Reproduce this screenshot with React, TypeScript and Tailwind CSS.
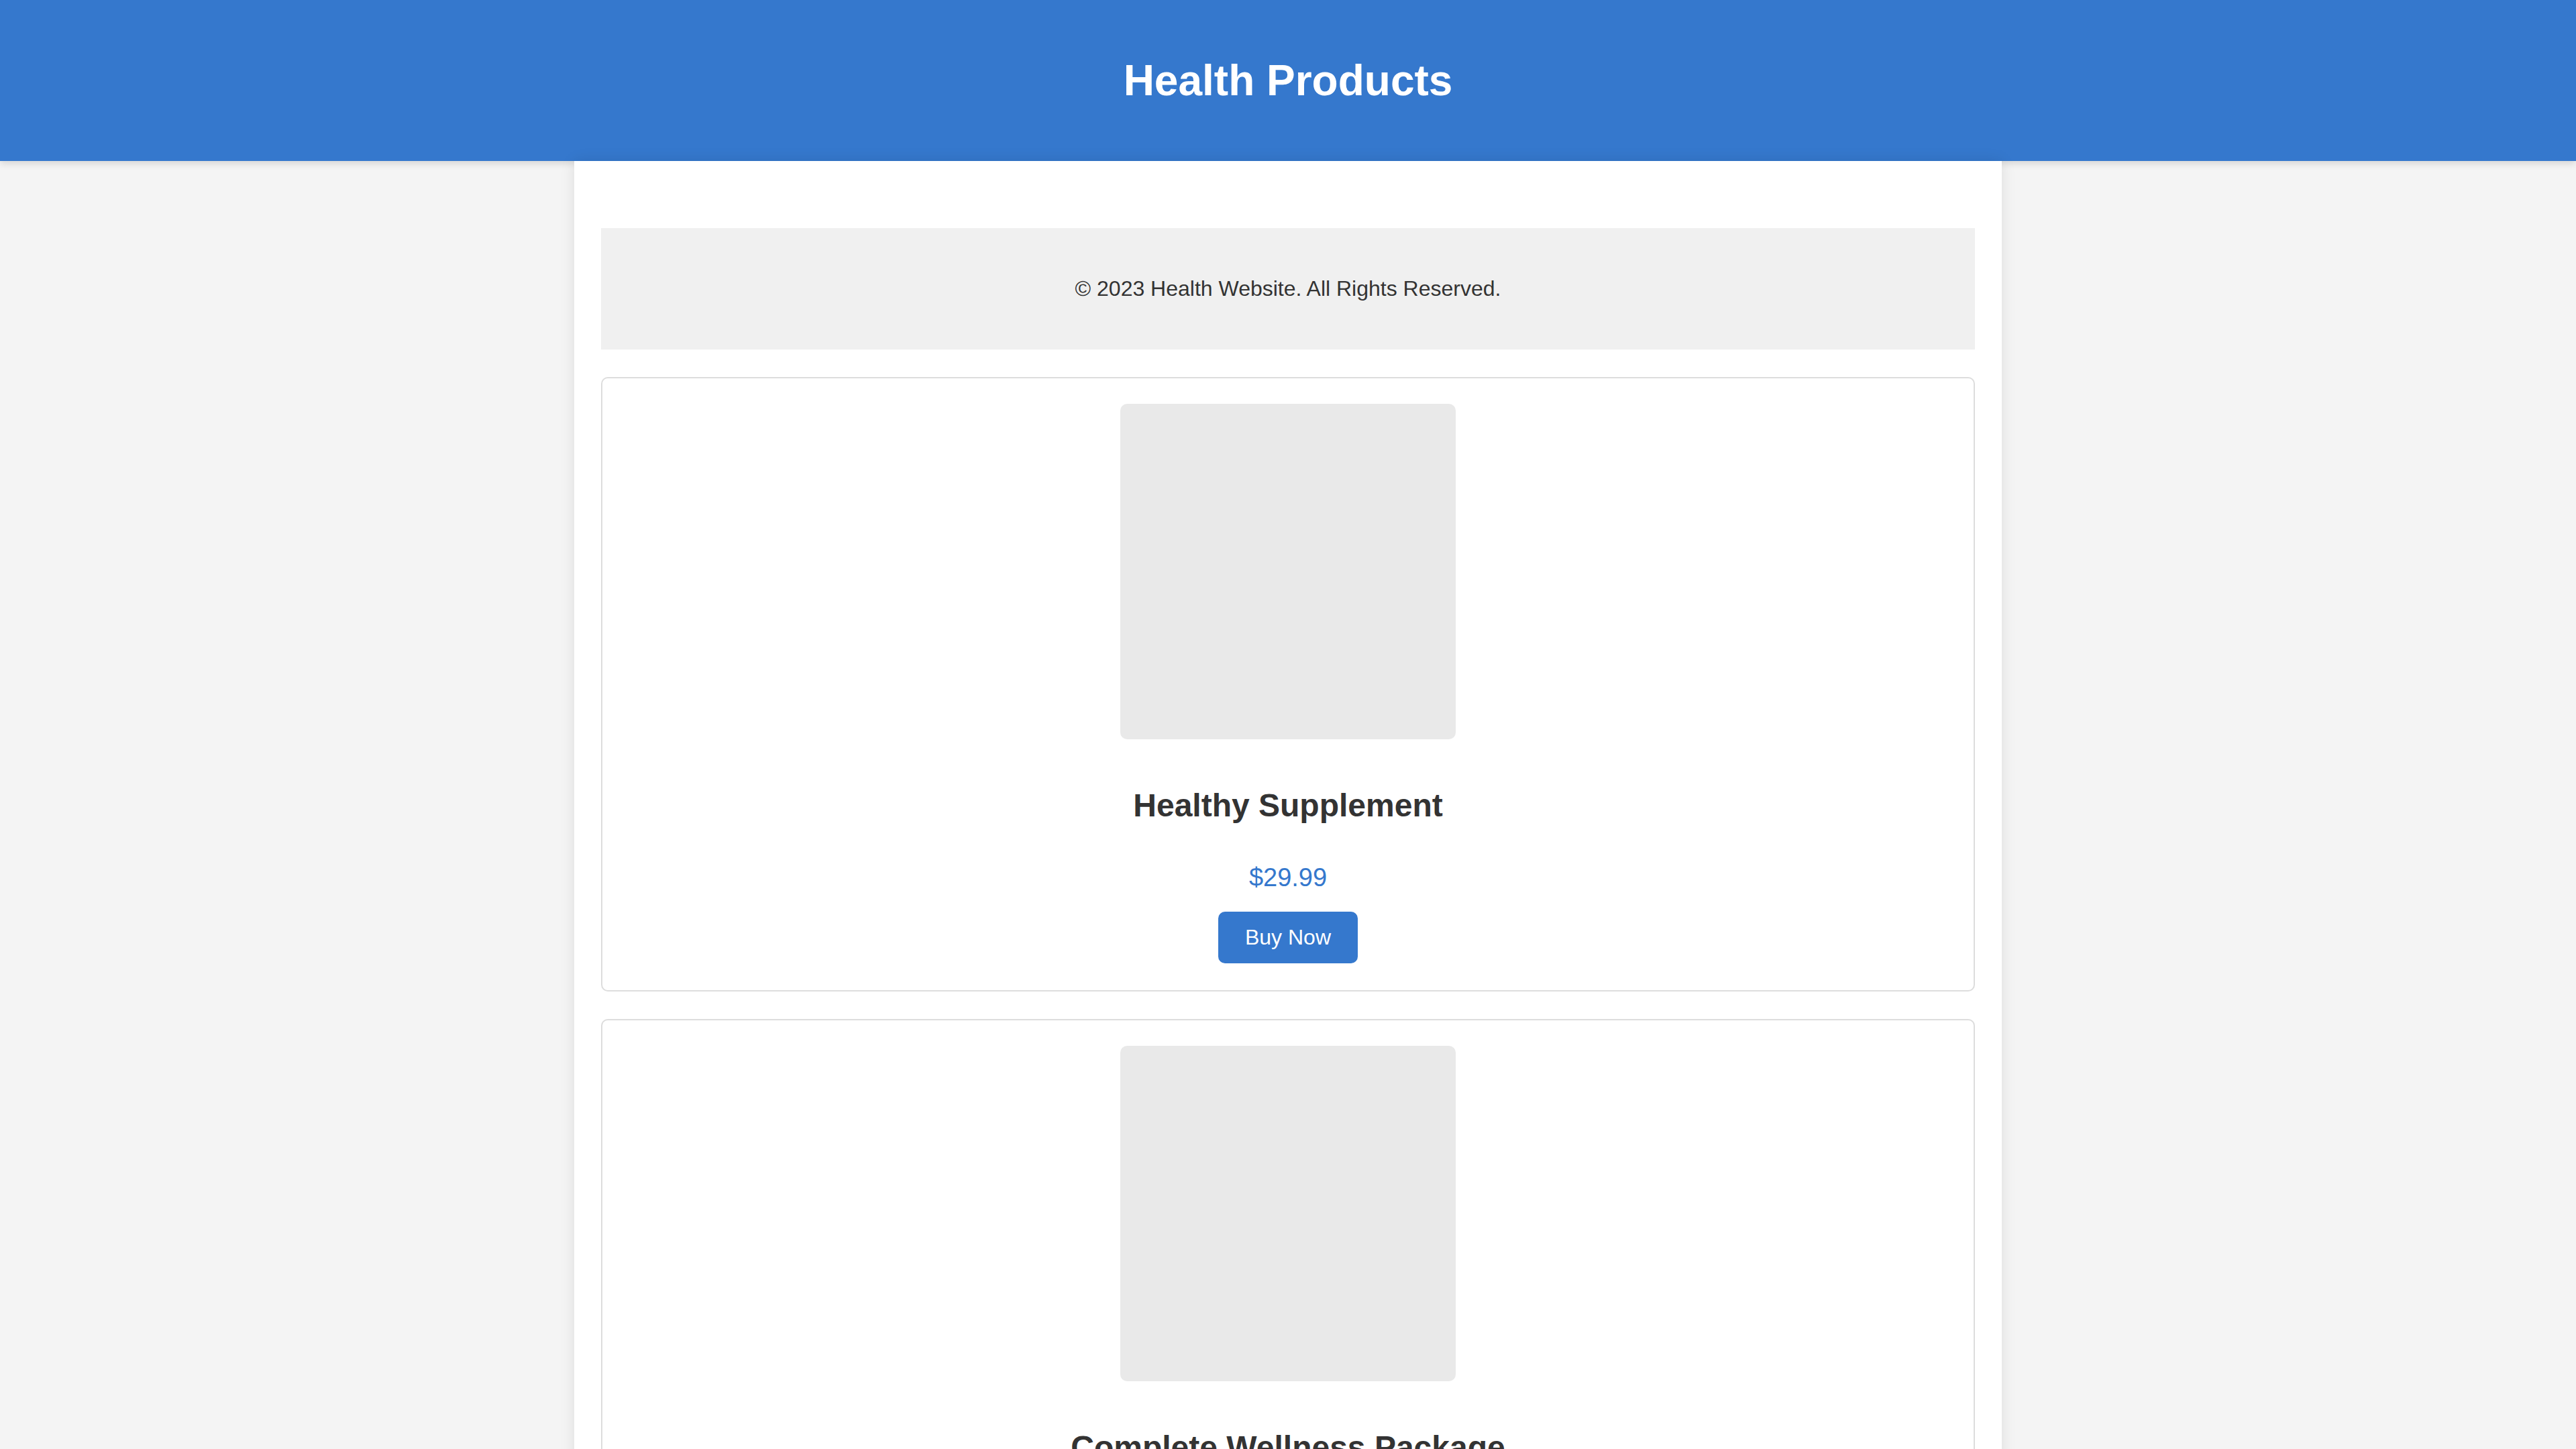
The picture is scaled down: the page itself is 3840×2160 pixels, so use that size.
export default function App() {
  const products = [
    { name: "Healthy Supplement", price: "$29.99" },
    { name: "Complete Wellness Package", price: "$79.99" },
    { name: "Organic Vitamin Pack", price: "$19.99" },
  ];
  return (
    <div className="min-h-screen bg-[#f4f4f4] font-['Liberation_Sans',Arial,sans-serif]">
      <header className="relative z-0 h-[240px] bg-[#3578cd] flex items-center justify-center shadow-[0_4px_10px_rgba(0,0,0,0.12)]">
        <h1 className="text-[64px] font-bold text-white leading-[74px]">Health Products</h1>
      </header>
      <div className="relative w-[2128px] mx-auto bg-white px-[40px] pt-[100px] pb-[40px] shadow-[0_0_20px_rgba(0,0,0,0.1)] flex flex-col gap-[41px]">
        <footer className="bg-[#f0f0f0] py-[71px] text-center text-[32px] leading-[39px] text-[#333]">
          © 2023 Health Website. All Rights Reserved.
        </footer>
        {products.map((p) => (
          <div
            key={p.name}
            className="border-2 border-[#dddddd] rounded-[10px] pt-[38px] pb-[40px] flex flex-col items-center"
          >
            <div className="w-[500px] h-[500px] bg-[#e9e9e9] rounded-[10px]" />
            <h2 className="mt-[71px] text-[48px] font-bold leading-[55px] text-[#333]">{p.name}</h2>
            <p className="mt-[58px] text-[38px] leading-[44px] text-[#3578cd]">{p.price}</p>
            <button className="mt-[29px] bg-[#3578cd] text-white text-[32px] leading-[37px] px-[40px] py-[20px] rounded-[10px]">
              Buy Now
            </button>
          </div>
        ))}
      </div>
    </div>
  );
}
